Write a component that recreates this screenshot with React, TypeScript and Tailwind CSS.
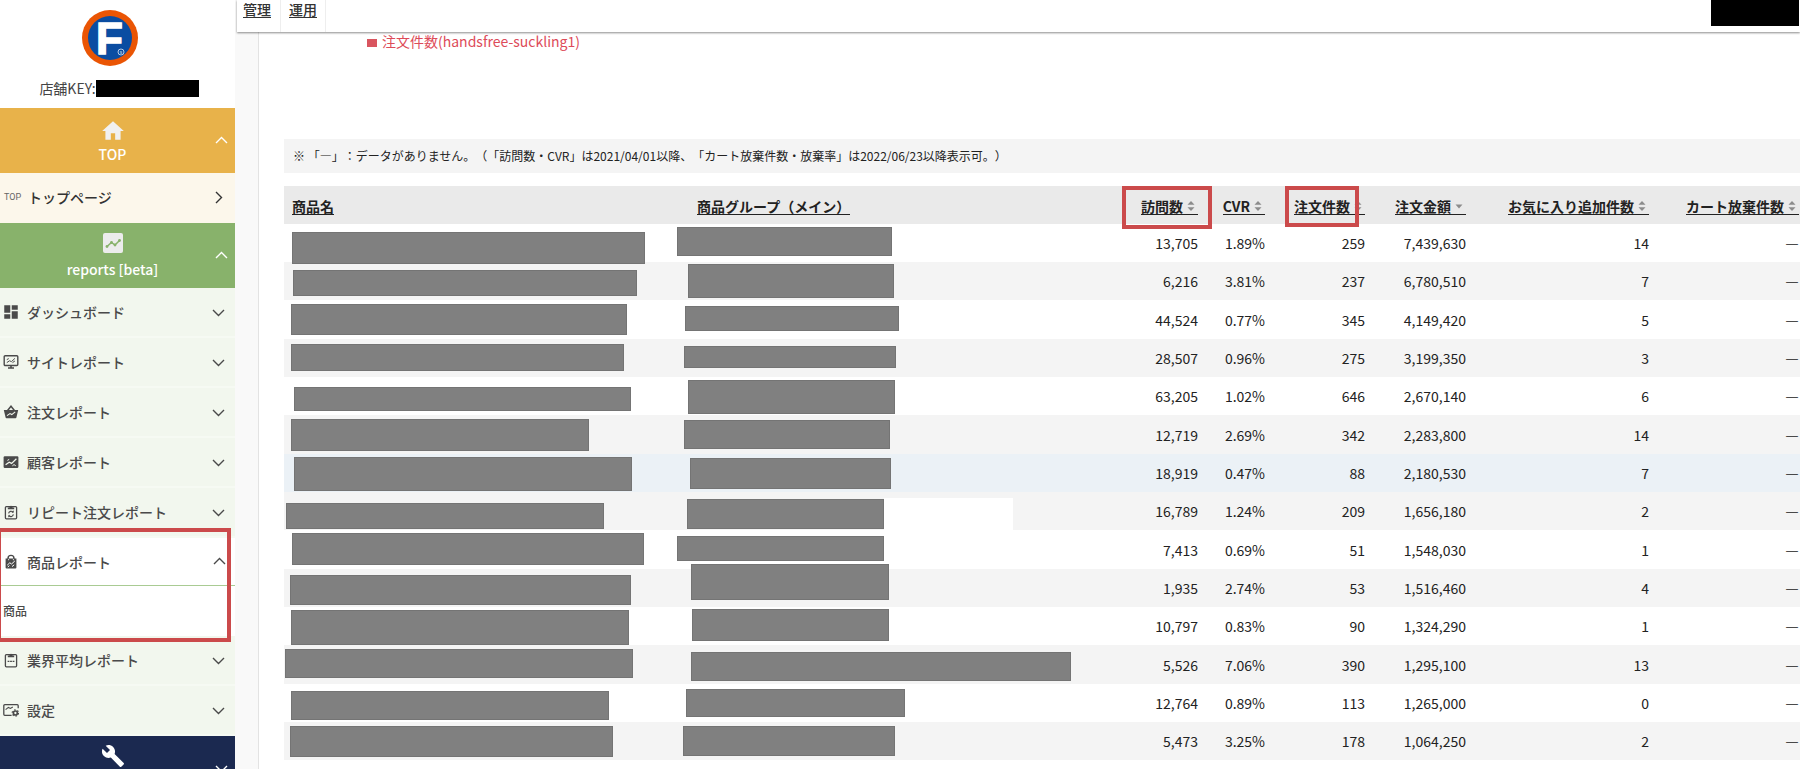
import React from "react";
import { MdBuild, MdDashboard, MdHome } from "react-icons/md";

/**
 * Sidebar icons
 */
function ChartTileIcon() {
  return (
    <svg width="20" height="20" viewBox="0 0 20 20" aria-hidden="true">
      <rect width="20" height="20" rx="2" fill="#ececec" />
      <path d="M4 13.5 8.5 9.5 12 12 16.5 7.5" fill="none" stroke="#88b26b" strokeWidth="1.5" />
      <g fill="#88b26b">
        <circle cx="4" cy="13.5" r="1.4" />
        <circle cx="8.5" cy="9.5" r="1.4" />
        <circle cx="12" cy="12" r="1.4" />
        <circle cx="16.5" cy="7.5" r="1.4" />
      </g>
    </svg>
  );
}

function MonitorIcon() {
  return (
    <svg width="16" height="16" viewBox="0 0 16 16" fill="none" stroke="currentColor" aria-hidden="true">
      <rect x="1.2" y="1.7" width="13.6" height="9.8" rx="1" strokeWidth="1.4" />
      <path d="M8 11.5v2M5 14h6" strokeWidth="1.6" />
      <path d="M3.8 8.6 6.5 6.8l2 .8 3.4-3.2M3.8 5.6l2-1M9.5 8.6l2.4-1.6" strokeWidth="1" />
    </svg>
  );
}

function BasketIcon() {
  return (
    <svg width="16" height="16" viewBox="0 0 16 16" aria-hidden="true">
      <path d="M4.4 6.8 8 2.2l3.6 4.6" fill="none" stroke="currentColor" strokeWidth="1.5" />
      <path d="M.8 6h14.4l-1.8 7.6a.9.9 0 0 1-.9.7h-9a.9.9 0 0 1-.9-.7z" fill="currentColor" />
      <path d="m4 11.6 3-2 1.8 1 3.4-2.8" fill="none" stroke="#f2f7ee" strokeWidth="1.1" />
    </svg>
  );
}

function CustomerIcon() {
  return (
    <svg width="16" height="16" viewBox="0 0 16 16" aria-hidden="true">
      <rect x=".6" y="2.2" width="14.8" height="11.8" rx="1.2" fill="currentColor" />
      <path d="m2.6 10.8 3.6-2.6 2.4 1.2 4.8-4.6" fill="none" stroke="#f2f7ee" strokeWidth="1.2" />
      <path d="m9.4 11.8 1.6-1.2 1.8 1.2M4.4 6.4l1.8-1" fill="none" stroke="#f2f7ee" strokeWidth="1" />
    </svg>
  );
}

function RepeatIcon() {
  return (
    <svg width="16" height="16" viewBox="0 0 16 16" fill="none" stroke="currentColor" aria-hidden="true">
      <rect x="2.4" y="2.6" width="11.2" height="12.2" rx="1" strokeWidth="1.3" />
      <path d="M4.8 3.4h1.6a1.6 1.6 0 0 1 3.2 0h1.6v1.8H4.8z" fill="currentColor" stroke="none" />
      <path d="M5.6 9.4A2.6 2.6 0 0 1 10 8M10.4 10.4A2.6 2.6 0 0 1 6 11.8" strokeWidth="1.1" />
      <path d="M10.4 6.6v1.8H8.8M5.6 13.200v-1.800h1.600" strokeWidth=".8" />
    </svg>
  );
}

function BagIcon() {
  return (
    <svg width="16" height="16" viewBox="0 0 16 16" aria-hidden="true">
      <path d="M5 5.6V4.4a3 3 0 0 1 6 0v1.2" fill="none" stroke="currentColor" strokeWidth="1.4" />
      <path d="M2.6 4.4h10.8v9.2a1 1 0 0 1-1 1H3.6a1 1 0 0 1-1-1z" fill="currentColor" />
      <path d="M5.6 6.2v-1M10.4 6.2v-1" stroke="#fff" strokeWidth="1" />
      <path d="m4.2 11.2 2.6-2.4 1.8 1.2 3.2-3M4.8 13l1.6-1.4M9 12.6l2.2-1.8" fill="none" stroke="#fff" strokeWidth="1" />
    </svg>
  );
}

function ClipboardIcon() {
  return (
    <svg width="16" height="16" viewBox="0 0 16 16" fill="none" stroke="currentColor" aria-hidden="true">
      <rect x="2.4" y="2.6" width="11.2" height="12.2" rx="1" strokeWidth="1.3" />
      <path d="M4.8 3.4h1.6a1.6 1.6 0 0 1 3.2 0h1.6v1.8H4.8z" fill="currentColor" stroke="none" />
      <path d="M4.6 9.4h6.8" strokeWidth="1.3" strokeDasharray="1.8 .7" />
    </svg>
  );
}

function SettingIcon() {
  return (
    <svg width="16" height="16" viewBox="0 0 16 16" fill="none" stroke="currentColor" aria-hidden="true">
      <path d="M8.6 13.3H1.8a1 1 0 0 1-1-1V3.7a1 1 0 0 1 1-1h12.4a1 1 0 0 1 1 1v2.5" strokeWidth="1.3" />
      <path d="m2.6 7.6 2.8-2.2 2 1 2.4-1.4" strokeWidth="1.1" />
      <circle cx="12.4" cy="11" r="2" strokeWidth="1.7" />
      <circle cx="12.4" cy="11" r="3.2" strokeWidth="1.2" strokeDasharray="1.5 1.85" />
    </svg>
  );
}

function Chevron({ dir }: { dir: "up" | "down" | "right" }) {
  const d = { up: "M1 9 6.5 3.5 12 9", down: "M1 4 6.5 9.5 12 4", right: "M4 1 9.5 6.5 4 12" }[dir];
  return (
    <svg width="13" height="13" viewBox="0 0 13 13" fill="none" stroke="currentColor" strokeWidth="1.4" aria-hidden="true">
      <path d={d} />
    </svg>
  );
}

function Logo() {
  return (
    <svg width="58" height="58" viewBox="0 0 58 58" role="img" aria-label="logo">
      <circle cx="29" cy="29" r="28" fill="#ea5504" />
      <circle cx="29" cy="29" r="22" fill="#0a4da2" />
      <text
        x="15"
        y="45"
        fill="#fff"
        stroke="#fff"
        strokeWidth="1.4"
        fontFamily="Liberation Sans, sans-serif"
        fontWeight="700"
        fontSize="44"
      >
        F
      </text>
      <circle cx="40" cy="43" r="3" fill="none" stroke="#dfe8f5" strokeWidth=".8" />
      <text x="40" y="45" fill="#dfe8f5" fontFamily="Liberation Sans, sans-serif" fontSize="5" textAnchor="middle">
        s
      </text>
    </svg>
  );
}

/**
 * Sidebar
 */
interface ReportItem {
  label: string;
  icon: React.ReactNode;
}

const reportsBefore: ReportItem[] = [
  { label: "ダッシュボード", icon: <MdDashboard size={18} className="-mx-px" /> },
  { label: "サイトレポート", icon: <MonitorIcon /> },
  { label: "注文レポート", icon: <BasketIcon /> },
  { label: "顧客レポート", icon: <CustomerIcon /> },
  { label: "リピート注文レポート", icon: <RepeatIcon /> },
];

const reportsAfter: ReportItem[] = [
  { label: "業界平均レポート", icon: <ClipboardIcon /> },
  { label: "設定", icon: <SettingIcon /> },
];

function ReportRow({ item }: { item: ReportItem }) {
  return (
    <button
      type="button"
      className="flex h-[50px] w-full items-center gap-2 border-b-2 border-[#f6faf3] bg-[#f2f7ee] pr-[10px] pl-[3px] text-left font-medium text-[#4a4a4a]"
    >
      {item.icon}
      <span className="flex-1">{item.label}</span>
      <Chevron dir="down" />
    </button>
  );
}

function Sidebar() {
  return (
    <aside className="w-[235px] shrink-0 bg-white">
      <div className="flex h-[108px] flex-col items-center pt-[9px] pr-[15px]">
        <Logo />
        <div className="mt-[11px] ml-[18px] flex items-center">
          <span className="text-[#444]">店舗KEY:</span>
          <span className="h-[17px] w-[103px] bg-black" />
        </div>
      </div>

      <button type="button" className="grid h-[65px] w-full grid-cols-[10px_1fr_13px] items-center bg-[#e8b24a] pr-[7px] text-white">
        <span className="col-start-2 flex flex-col items-center font-medium leading-5">
          <MdHome size={26} className="text-[#f1f1f1]" />
          TOP
        </span>
        <Chevron dir="up" />
      </button>
      <a href="#top" className="flex h-[50px] items-center bg-[#fcf7eb] pr-[10px] pb-[2px] pl-1 font-medium text-[#333]">
        <span className="w-6 font-['Liberation_Sans_Narrow','Roboto',sans-serif] text-[9px] font-normal text-[#666]">TOP</span>
        <span className="flex-1">トップページ</span>
        <Chevron dir="right" />
      </a>

      <button type="button" className="grid h-[65px] w-full grid-cols-[10px_1fr_13px] items-center bg-[#88b26b] pr-[7px] text-white">
        <span className="col-start-2 flex flex-col items-center gap-[6px] font-medium leading-5">
          <ChartTileIcon />
          reports [beta]
        </span>
        <Chevron dir="up" />
      </button>
      {reportsBefore.map((item) => (
        <ReportRow key={item.label} item={item} />
      ))}

      {/* Opened group */}
      <div className="relative bg-white font-medium text-[#4a4a4a]">
        <button type="button" className="flex h-12 w-full items-center gap-2 border-b border-[#a9cb93] pr-[9px] pl-[3px] text-left">
          <BagIcon />
          <span className="flex-1">商品レポート</span>
          <Chevron dir="up" />
        </button>
        <a href="#items" className="flex h-[50px] items-center pl-[3px] text-[12px]">
          商品
        </a>
        <span className="absolute -top-[10px] right-1 -bottom-[6px] -left-[3px] border-4 border-[#cb4a4b]" />
      </div>
      {reportsAfter.map((item) => (
        <ReportRow key={item.label} item={item} />
      ))}

      <button
        type="button"
        aria-label="ツール"
        className="grid h-[65px] w-full grid-cols-[10px_1fr_13px] items-center bg-[#1b2950] pr-[7px] text-white"
      >
        <MdBuild size={24} className="col-start-2 mt-2 self-start justify-self-center" />
        <Chevron dir="down" />
      </button>
    </aside>
  );
}

/**
 * Product table
 */
type Mask = [left: number, top: number, width: number, height: number];

interface ProductRow {
  name: Mask;
  group: Mask;
  values: string[];
}

const rows: ProductRow[] = [
  { name: [8, 8, 353, 32], group: [-12, 3, 215, 29], values: ["13,705", "1.89%", "259", "7,439,630", "14"] },
  { name: [9, 8, 344, 26], group: [-1, 2, 206, 34], values: ["6,216", "3.81%", "237", "6,780,510", "7"] },
  { name: [7, 4, 336, 31], group: [-4, 6, 214, 25], values: ["44,524", "0.77%", "345", "4,149,420", "5"] },
  { name: [7, 5, 333, 27], group: [-5, 7, 212, 22], values: ["28,507", "0.96%", "275", "3,199,350", "3"] },
  { name: [10, 10, 337, 24], group: [-1, 3, 207, 34], values: ["63,205", "1.02%", "646", "2,670,140", "6"] },
  { name: [7, 4, 298, 32], group: [-5, 5, 206, 29], values: ["12,719", "2.69%", "342", "2,283,800", "14"] },
  { name: [10, 3, 338, 34], group: [1, 4, 201, 31], values: ["18,919", "0.47%", "88", "2,180,530", "7"] },
  { name: [2, 11, 318, 26], group: [-2, 7, 197, 30], values: ["16,789", "1.24%", "209", "1,656,180", "2"] },
  { name: [8, 3, 352, 32], group: [-12, 6, 207, 25], values: ["7,413", "0.69%", "51", "1,548,030", "1"] },
  { name: [6, 6, 341, 30], group: [2, -5, 198, 36], values: ["1,935", "2.74%", "53", "1,516,460", "4"] },
  { name: [7, 3, 338, 35], group: [3, 2, 197, 32], values: ["10,797", "0.83%", "90", "1,324,290", "1"] },
  { name: [1, 4, 348, 29], group: [2, 7, 380, 29], values: ["5,526", "7.06%", "390", "1,295,100", "13"] },
  { name: [7, 7, 318, 29], group: [-3, 5, 219, 28], values: ["12,764", "0.89%", "113", "1,265,000", "0"] },
  { name: [6, 4, 323, 31], group: [-6, 4, 212, 30], values: ["5,473", "3.25%", "178", "1,064,250", "2"] },
];

const HOVERED = 6;
const ERASED = 7;

function MaskBar({ mask }: { mask: Mask }) {
  const [left, top, width, height] = mask;
  return <span className="absolute border border-[#747474] bg-[#808080]" style={{ left, top, width, height }} />;
}

interface SortHeaderProps {
  label: string;
  sort?: "both" | "desc";
}

function SortHeader({ label, sort }: SortHeaderProps) {
  return (
    <button type="button" className="inline-flex items-center border-b border-[#222] align-middle leading-4 font-bold whitespace-nowrap text-[#222]">
      {label}
      {sort && (
        <svg width="15" height="12" viewBox="0 0 15 12" fill="#8c8c8c" aria-hidden="true">
          {sort === "both" && <path d="m8 1 3.5 3.8h-7z" />}
          <path d={sort === "both" ? "m8 11 3.5-3.800h-7z" : "m8 8.400 3.500-3.800h-7z"} />
        </svg>
      )}
    </button>
  );
}

function ProductTable() {
  return (
    <table className="mt-[13px] w-full table-fixed text-right text-[#222]">
      <colgroup>
        <col className="w-[405px]" />
        <col />
        <col className="w-[100px]" />
        <col className="w-[67px]" />
        <col className="w-[100px]" />
        <col className="w-[101px]" />
        <col className="w-[183px]" />
        <col className="w-[143px]" />
      </colgroup>
      <thead>
        <tr className="h-[38px] bg-[#eaeaea]">
          <th className="px-2 text-left">
            <SortHeader label="商品名" />
          </th>
          <th className="px-2 text-left">
            <SortHeader label="商品グループ（メイン）" />
          </th>
          <th className="relative pr-2">
            <SortHeader label="訪問数" sort="both" />
            <span className="absolute top-0 -right-[6px] h-[43px] w-[90px] border-4 border-[#cb4a4b]" />
          </th>
          <th className="pr-2">
            <SortHeader label="CVR" sort="both" />
          </th>
          <th className="relative pr-2">
            <SortHeader label="注文件数" sort="both" />
            <span className="absolute top-0 left-3 h-[41px] w-[74px] border-4 border-[#cb4a4b]" />
          </th>
          <th className="pr-2">
            <SortHeader label="注文金額" sort="desc" />
          </th>
          <th className="pr-2">
            <SortHeader label="お気に入り追加件数" sort="both" />
          </th>
          <th className="pr-px">
            <SortHeader label="カート放棄件数" sort="both" />
          </th>
        </tr>
      </thead>
      <tbody>
        {rows.map((row, i) => (
          <tr key={i} className={`h-[38px] nth-[3n]:h-[39px] ${i === HOVERED ? "bg-[#ebf1f6]" : "even:bg-[#f4f4f4]"}`}>
            <td className="relative">
              <MaskBar mask={row.name} />
            </td>
            <td className="relative">
              {i === ERASED && <span className="absolute top-[6px] bottom-0 left-[195px] w-[129px] bg-white" />}
              <MaskBar mask={row.group} />
            </td>
            {row.values.map((value, n) => (
              <td key={n} className="pr-2">
                {value}
              </td>
            ))}
            <td className="pr-px font-medium">―</td>
          </tr>
        ))}
      </tbody>
    </table>
  );
}

export default function App() {
  return (
    <div className="flex h-screen overflow-hidden bg-[#f9f9f9] font-['Noto_Sans_CJK_JP',sans-serif] text-[14px] leading-5 [text-spacing-trim:space-all]">
      <Sidebar />

      <div className="flex min-w-0 flex-1 flex-col pl-[2px]">
        <header className="z-10 flex h-8 shrink-0 items-start justify-between bg-white shadow-[0_1px_2px_rgba(0,0,0,0.45)]">
          <nav className="flex text-[#333]">
            <a href="#manage" className="flex h-8 border-r border-[#eee] pr-[9px] pl-[6px] font-medium">
              <span className="h-[18px] border-b border-[#333] leading-[18px]">管理</span>
            </a>
            <a href="#operate" className="flex h-8 border-r border-[#eee] px-2 font-medium">
              <span className="h-[18px] border-b border-[#333] leading-[18px]">運用</span>
            </a>
          </nav>
          <div className="mr-px h-[26px] w-[88px] bg-black" />
        </header>

        <main className="ml-[21px] flex-1 border-l border-[#e3e3e3] bg-white pl-[25px]">
          <div className="flex h-[107px] items-start gap-[5px] pl-[83px] leading-[18px] text-[#dd4b59]">
            <span className="mt-[7px] h-2 w-[10px] bg-[#d9555f]" />
            <span>注文件数(handsfree-suckling1)</span>
          </div>
          <p className="bg-[#f4f4f4] px-[9px] py-[7px] text-[12px] text-[#222]">
            ※ 「―」：データがありません。（「訪問数・CVR」は2021/04/01以降、「カート放棄件数・放棄率」は2022/06/23以降表示可。）
          </p>
          <ProductTable />
        </main>
      </div>
    </div>
  );
}
